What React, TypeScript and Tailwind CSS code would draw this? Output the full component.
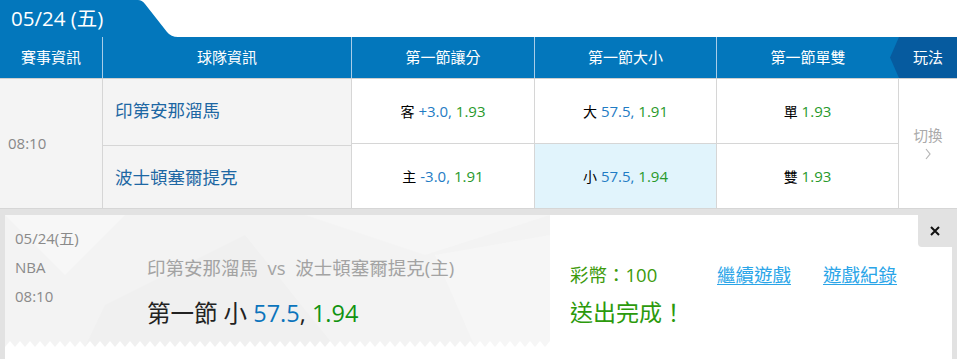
import React from 'react';

const font = { fontFamily: '"Open Sans", "Noto Sans CJK TC", sans-serif' };

const cols = ['w-[103px]', 'w-[249px]', 'w-[183px]', 'w-[182px]', 'w-[182px]'];

const Odds = ({ label, line, odds }: { label: string; line?: string; odds: string }) => (
  <span className="text-[15px]">
    <span className="text-black text-[14px]">{label}</span>{' '}
    {line && <span className="text-[#1f7cc4]">{line}, </span>}
    <span className="text-[#28992b]">{odds}</span>
  </span>
);

const App = () => {
  return (
    <div className="w-[957px] h-[359px] bg-white overflow-hidden flex flex-col" style={font}>
      {/* date tab */}
      <div className="h-[37px] flex shrink-0">
        <div className="bg-[#0377bc] w-[136px] h-full flex items-center pl-[11px] text-white text-[20.5px]">
          05/24 (五)
        </div>
        <svg width="44" height="37" viewBox="0 0 44 37" className="block">
          <path d="M0 0 H2 Q6 0 9 4 L31 32 Q35 37 42 37 H0 Z" fill="#0377bc" />
        </svg>
      </div>

      {/* header */}
      <div className="h-[41px] flex bg-[#0377bc] text-white text-[15px] shrink-0">
        {['賽事資訊', '球隊資訊', '第一節讓分', '第一節大小', '第一節單雙'].map((t, i) => (
          <div
            key={t}
            className={`${cols[i]} flex items-center justify-center ${i < 4 ? 'border-r border-[#a9cde8]' : ''}`}
          >
            {t}
          </div>
        ))}
        <div className="relative flex-1 bg-[#065b9f] flex items-center justify-center">
          <svg width="9" height="41" viewBox="0 0 9 41" className="absolute left-[-9px] top-0">
            <path d="M9 0 L0 20.5 L9 41 Z" fill="#065b9f" />
          </svg>
          玩法
        </div>
      </div>

      {/* body */}
      <div className="flex h-[131px] border-t border-[#cfcfcf] border-b border-b-[#d6d6d6] shrink-0">
        <div className="w-[103px] bg-[#f4f4f4] border-r border-[#d6d6d6] flex items-center pl-[8px] text-[15px] text-[#888]">
          08:10
        </div>
        <div className="w-[249px] bg-[#f4f4f4] border-r border-[#d6d6d6] flex flex-col text-[17.5px] text-[#1d67a3]">
          <div className="flex-1 flex items-center pl-[12px] pb-[4px] border-b border-[#d6d6d6]">印第安那溜馬</div>
          <div className="flex-1 flex items-center pl-[12px]">波士頓塞爾提克</div>
        </div>
        <div className="w-[183px] border-r border-[#d6d6d6] flex flex-col">
          <div className="flex-1 flex items-center justify-center border-b border-[#d6d6d6]">
            <Odds label="客" line="+3.0" odds="1.93" />
          </div>
          <div className="flex-1 flex items-center justify-center">
            <Odds label="主" line="-3.0" odds="1.91" />
          </div>
        </div>
        <div className="w-[182px] border-r border-[#d6d6d6] flex flex-col">
          <div className="flex-1 flex items-center justify-center border-b border-[#d6d6d6]">
            <Odds label="大" line="57.5" odds="1.91" />
          </div>
          <div className="flex-1 flex items-center justify-center bg-[#e1f4fc]">
            <Odds label="小" line="57.5" odds="1.94" />
          </div>
        </div>
        <div className="w-[182px] border-r border-[#d6d6d6] flex flex-col">
          <div className="flex-1 flex items-center justify-center border-b border-[#d6d6d6]">
            <Odds label="單" odds="1.93" />
          </div>
          <div className="flex-1 flex items-center justify-center">
            <Odds label="雙" odds="1.93" />
          </div>
        </div>
        <div className="flex-1 flex flex-col items-center justify-center text-[#aaa] text-[14.5px] leading-[18px]">
          <span>切換</span>
          <svg width="8" height="12" viewBox="0 0 8 12" className="mt-[3px]">
            <path d="M2 1 L6 6 L2 11" fill="none" stroke="#b5b5b5" strokeWidth="1.2" />
          </svg>
        </div>
      </div>

      {/* result panel */}
      <div className="flex-1 bg-[#e2e2e2] pt-[6px] px-[5px]">
        <div className="relative h-full bg-white flex">
          <div className="relative w-[545px] h-[132px] bg-[#f3f3f3] overflow-hidden">
            <svg width="545" height="132" className="absolute inset-0">
              <polygon points="0,0 120,0 60,60" fill="#f7f7f7" />
              <polygon points="100,90 240,20 330,132 80,132" fill="#f0f0f0" />
              <polygon points="300,0 545,0 420,40" fill="#f6f6f6" />
              <polygon points="430,40 545,20 545,132 470,132" fill="#f6f6f6" />
            </svg>
            <div className="relative flex h-full">
              <div className="w-[142px] pl-[10px] pt-[13px] text-[15px] text-[#8a8a8a] flex flex-col gap-[9px] leading-[20px]">
                <span>05/24(五)</span>
                <span>NBA</span>
                <span>08:10</span>
              </div>
              <div className="flex flex-col pt-[41px]">
                <span className="text-[18.5px] text-[#a3a3a3] leading-[24px] whitespace-nowrap">
                  印第安那溜馬&nbsp; vs&nbsp; 波士頓塞爾提克(主)
                </span>
                <span className="text-[23.5px] text-[#222] leading-[30px] mt-[18px] whitespace-nowrap">
                  第一節 小 <span className="text-[#0b74bc]">57.5</span>,{' '}
                  <span className="text-[#119311]">1.94</span>
                </span>
              </div>
            </div>
            {/* zigzag edge */}
            <svg width="545" height="6" className="absolute left-0 bottom-0">
              <defs>
                <pattern id="zz" width="10" height="6" patternUnits="userSpaceOnUse">
                  <path d="M0 6 L5 0 L10 6 Z" fill="#ffffff" />
                </pattern>
              </defs>
              <rect width="545" height="6" fill="url(#zz)" />
            </svg>
          </div>

          <div className="flex flex-col pl-[20px] pt-[48px]">
            <div className="flex items-center text-[18.5px] leading-[24px] whitespace-nowrap">
              <span className="text-[#3c9a0c] w-[147px]">彩幣：100</span>
              <a href="#" className="text-[#2aa5e8] underline underline-offset-2 w-[106px]">繼續遊戲</a>
              <a href="#" className="text-[#2aa5e8] underline underline-offset-2">遊戲紀錄</a>
            </div>
            <div className="text-[23px] text-[#2c9a0c] mt-[10px] leading-[30px]">送出完成！</div>
          </div>

          <div className="absolute right-0 top-0 w-[34px] h-[32px] bg-[#e2e2e2] rounded-bl-[4px] flex items-center justify-center">
            <svg width="10" height="10" viewBox="0 0 10 10">
              <path d="M1 1 L9 9 M9 1 L1 9" stroke="#111" strokeWidth="2" />
            </svg>
          </div>
        </div>
      </div>
    </div>
  );
};

export default App;
